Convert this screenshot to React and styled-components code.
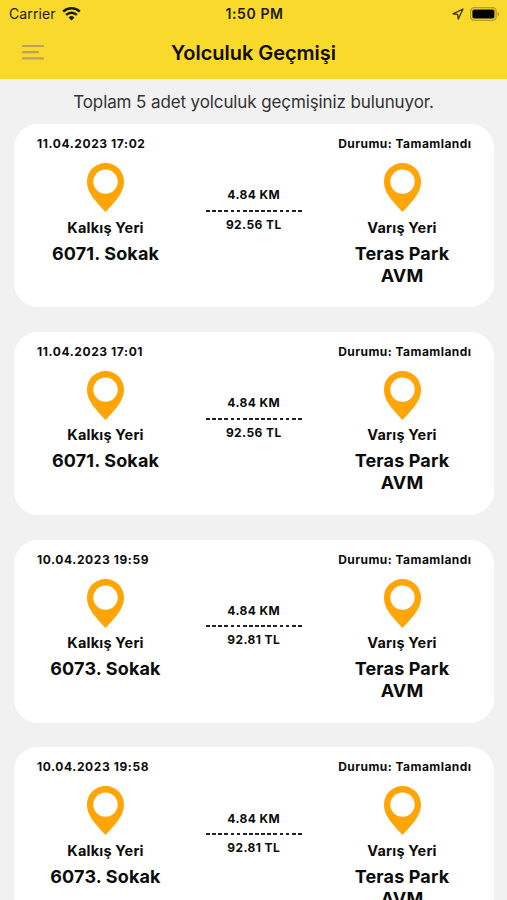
import React from 'react';
import styled, { createGlobalStyle } from 'styled-components';

const GlobalStyle = createGlobalStyle`
  * { box-sizing: border-box; }
  body { margin: 0; background: #f1f1f1; font-family: Inter, "Liberation Sans", sans-serif; color: #0c0c0c; }
`;

const Screen = styled.div`
  height: 900px;
  overflow: hidden;
  background: #f1f1f1;
`;

const Header = styled.header`
  height: 79.3px;
  background: #f9d92c;
`;

const StatusBar = styled.div`
  height: 27px;
  padding: 0 7px 0 9px;
  display: grid;
  grid-template-columns: 1fr auto 1fr;
  align-items: center;
  font-size: 14px;
  line-height: 27px;
  color: #1d1a08;
`;

const Carrier = styled.div`
  display: flex;
  align-items: center;
  gap: 6px;
  letter-spacing: 0.1px;
`;

const Clock = styled.div`
  padding-top: 1px;
  font-weight: 600;
  font-size: 14px;
  line-height: 26px;
  letter-spacing: 0.6px;
`;

const Indicators = styled.div`
  display: flex;
  align-items: center;
  justify-content: flex-end;
  gap: 6px;
`;

const NavBar = styled.div`
  height: 51px;
  display: grid;
  grid-template-columns: 44px 1fr 44px;
  align-items: center;
`;

const MenuButton = styled.button`
  border: 0;
  padding: 0 0 0 21px;
  background: none;
  display: flex;
`;

const Title = styled.h1`
  margin: 0;
  text-align: center;
  font-size: 20px;
  line-height: 26px;
  font-weight: 600;
  letter-spacing: -0.03px;
  color: #0d0b02;
  white-space: nowrap;
`;

const Summary = styled.p`
  margin: 0;
  padding-top: 12px;
  height: 44.8px;
  text-align: center;
  font-size: 17px;
  line-height: 22px;
  letter-spacing: -0.11px;
  color: #333;
  white-space: nowrap;
`;

const List = styled.main`
  display: flex;
  flex-direction: column;
  gap: 24.5px;
  padding: 0 13px 0 13.5px;
`;

const Card = styled.article`
  flex: none;
  height: 183.3px;
  border-radius: 24px;
  background: #fff;
  padding-top: 12px;
`;

const CardHead = styled.div`
  display: flex;
  justify-content: space-between;
  padding: 0 22.5px 0 23.5px;
  font-size: 12px;
  line-height: 16px;
  font-weight: 700;
`;

const TripDate = styled.time`
  letter-spacing: 0.59px;
`;

const TripStatus = styled.span`
  letter-spacing: 0.45px;
`;

const Route = styled.div`
  display: grid;
  grid-template-columns: 184px 1fr 184px;
  padding-top: 11px;
`;

const Stop = styled.div`
  display: flex;
  flex-direction: column;
  align-items: center;
  text-align: center;
`;

const StopLabel = styled.div`
  margin-top: 5.5px;
  font-size: 14.5px;
  line-height: 20px;
  font-weight: 650;
  letter-spacing: 0.2px;
`;

const StopName = styled.div`
  width: 122px;
  margin-top: 5px;
  font-size: 18px;
  line-height: 22px;
  font-weight: 700;
  letter-spacing: 0.15px;
`;

const Fare = styled.div`
  display: flex;
  flex-direction: column;
  align-items: center;
  padding-top: 24.2px;
  font-size: 12px;
  line-height: 16px;
  font-weight: 700;
  letter-spacing: 0.42px;
`;

const Dashes = styled.div`
  width: 96px;
  height: 2px;
  margin: 6.5px 0 5px;
  background: repeating-linear-gradient(90deg, #222 0 3.8px, transparent 3.8px 6.13px);
`;

const WifiIcon = () => (
  <svg width="19" height="14" viewBox="0 0 19 14" fill="none" stroke="#1d1a08" strokeWidth="2.4">
    <path d="M1.2 4.7a11.8 11.8 0 0 1 16.6 0" />
    <path d="M4.1 7.9a7.7 7.7 0 0 1 10.8 0" />
    <path d="M9.5 13.5 6.6 10.5a4.2 4.2 0 0 1 5.8 0z" fill="#1d1a08" stroke="none" />
  </svg>
);

const LocationIcon = () => (
  <svg width="12" height="12" viewBox="0 0 12 12" fill="none" stroke="#3b350f" strokeWidth="1.3" strokeLinejoin="round">
    <path d="M11 1 1 5.8l4.6.5.7 4.7z" />
  </svg>
);

const BatteryIcon = () => (
  <svg width="30" height="14" viewBox="0 0 30 14">
    <rect x="0.7" y="0.7" width="25.4" height="12.6" rx="3.6" fill="none" stroke="#b19b24" strokeWidth="1.3" />
    <rect x="2.4" y="2.5" width="22" height="9" rx="1.8" fill="#000" />
    <path d="M27.6 4.7c2.1.8 2.1 3.8 0 4.6z" fill="#b19b24" />
  </svg>
);

const MenuIcon = () => (
  <svg width="23" height="17" viewBox="0 0 23 17" stroke="#bf9f5c" strokeWidth="2.2" strokeLinecap="round">
    <path d="M2 2h20M2 8.2h15M2 14.4h20" />
  </svg>
);

const PinIcon = () => (
  <svg width="37" height="49" viewBox="0 0 37 49">
    <path
      fill="#ffa506"
      fillRule="evenodd"
      d="M18.5 0C8.3 0 0 8.2 0 18.4c0 7.4 3.3 12.8 7.8 18.6 3.2 4.1 6.8 8.2 10.7 12 3.9-3.8 7.5-7.9 10.7-12C33.7 31.2 37 25.8 37 18.4 37 8.2 28.7 0 18.5 0Zm0 6.4a12.2 12.2 0 1 1 0 24.4 12.2 12.2 0 0 1 0-24.4Z"
    />
  </svg>
);

const trips = [
  { date: '11.04.2023 17:02', from: '6071. Sokak', fare: '92.56 TL' },
  { date: '11.04.2023 17:01', from: '6071. Sokak', fare: '92.56 TL' },
  { date: '10.04.2023 19:59', from: '6073. Sokak', fare: '92.81 TL' },
  { date: '10.04.2023 19:58', from: '6073. Sokak', fare: '92.81 TL' },
];

const TripStop = ({ label, name }) => (
  <Stop>
    <PinIcon />
    <StopLabel>{label}</StopLabel>
    <StopName>{name}</StopName>
  </Stop>
);

const TripCard = ({ date, from, fare }) => (
  <Card>
    <CardHead>
      <TripDate>{date}</TripDate>
      <TripStatus>Durumu: Tamamlandı</TripStatus>
    </CardHead>
    <Route>
      <TripStop label="Kalkış Yeri" name={from} />
      <Fare>
        <span>4.84 KM</span>
        <Dashes />
        <span>{fare}</span>
      </Fare>
      <TripStop label="Varış Yeri" name="Teras Park AVM" />
    </Route>
  </Card>
);

export default function App() {
  return (
    <Screen>
      <GlobalStyle />
      <Header>
        <StatusBar>
          <Carrier>
            Carrier
            <WifiIcon />
          </Carrier>
          <Clock>1:50 PM</Clock>
          <Indicators>
            <LocationIcon />
            <BatteryIcon />
          </Indicators>
        </StatusBar>
        <NavBar>
          <MenuButton aria-label="Menü">
            <MenuIcon />
          </MenuButton>
          <Title>Yolculuk Geçmişi</Title>
        </NavBar>
      </Header>
      <Summary>Toplam 5 adet yolculuk geçmişiniz bulunuyor.</Summary>
      <List>
        {trips.map((trip) => (
          <TripCard key={trip.date} {...trip} />
        ))}
      </List>
    </Screen>
  );
}
